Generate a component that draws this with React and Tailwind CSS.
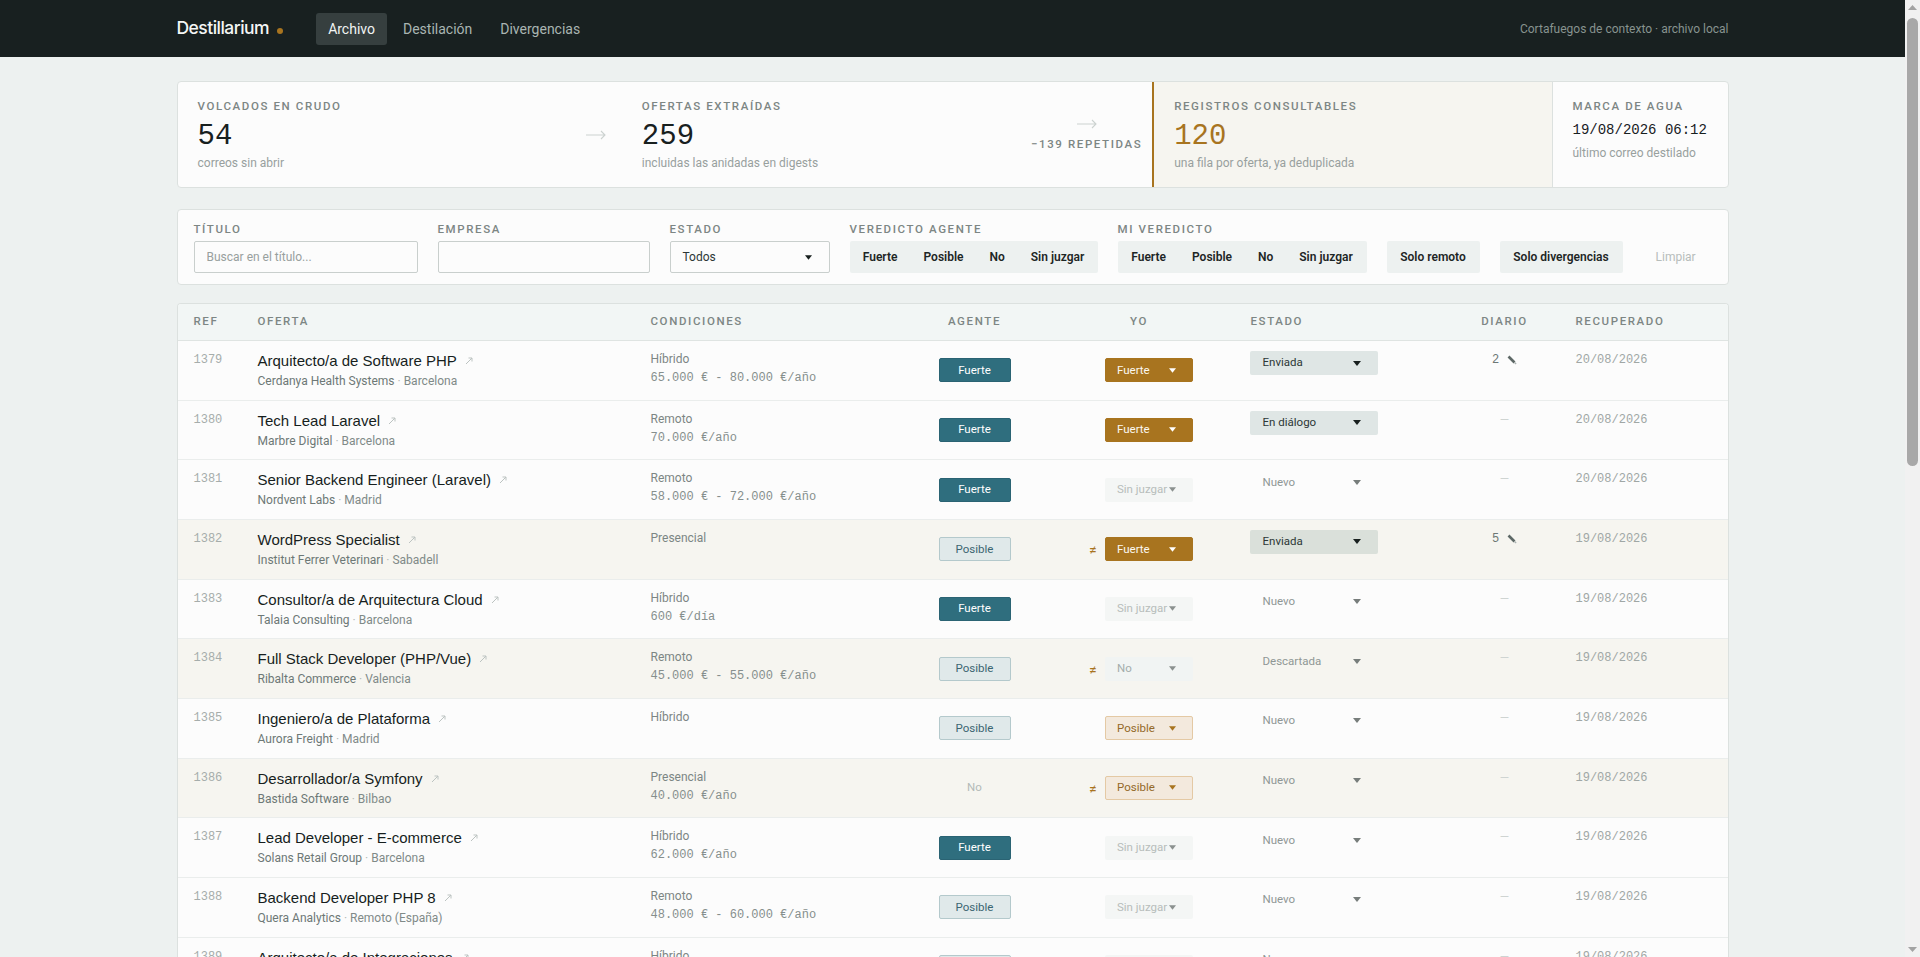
const sans = "font-['Roboto',sans-serif]";
const mono = "font-['Liberation_Mono',monospace]";
const display = "font-['Liberation_Sans',sans-serif]";

const rows = [
  { ref: 1379, title: "Arquitecto/a de Software PHP", company: "Cerdanya Health Systems", city: "Barcelona", mode: "Híbrido", pay: "65.000 € - 80.000 €/año", agent: "Fuerte", me: "Fuerte", state: "Enviada", diary: 2, date: "20/08/2026" },
  { ref: 1380, title: "Tech Lead Laravel", company: "Marbre Digital", city: "Barcelona", mode: "Remoto", pay: "70.000 €/año", agent: "Fuerte", me: "Fuerte", state: "En diálogo", date: "20/08/2026" },
  { ref: 1381, title: "Senior Backend Engineer (Laravel)", company: "Nordvent Labs", city: "Madrid", mode: "Remoto", pay: "58.000 € - 72.000 €/año", agent: "Fuerte", me: "Sin juzgar", state: "Nuevo", date: "20/08/2026" },
  { ref: 1382, title: "WordPress Specialist", company: "Institut Ferrer Veterinari", city: "Sabadell", mode: "Presencial", agent: "Posible", me: "Fuerte", state: "Enviada", diary: 5, date: "19/08/2026", diverge: true },
  { ref: 1383, title: "Consultor/a de Arquitectura Cloud", company: "Talaia Consulting", city: "Barcelona", mode: "Híbrido", pay: "600 €/día", agent: "Fuerte", me: "Sin juzgar", state: "Nuevo", date: "19/08/2026" },
  { ref: 1384, title: "Full Stack Developer (PHP/Vue)", company: "Ribalta Commerce", city: "Valencia", mode: "Remoto", pay: "45.000 € - 55.000 €/año", agent: "Posible", me: "No", state: "Descartada", date: "19/08/2026", diverge: true },
  { ref: 1385, title: "Ingeniero/a de Plataforma", company: "Aurora Freight", city: "Madrid", mode: "Híbrido", agent: "Posible", me: "Posible", state: "Nuevo", date: "19/08/2026" },
  { ref: 1386, title: "Desarrollador/a Symfony", company: "Bastida Software", city: "Bilbao", mode: "Presencial", pay: "40.000 €/año", agent: "No", me: "Posible", state: "Nuevo", date: "19/08/2026", diverge: true },
  { ref: 1387, title: "Lead Developer - E-commerce", company: "Solans Retail Group", city: "Barcelona", mode: "Híbrido", pay: "62.000 €/año", agent: "Fuerte", me: "Sin juzgar", state: "Nuevo", date: "19/08/2026" },
  { ref: 1388, title: "Backend Developer PHP 8", company: "Quera Analytics", city: "Remoto (España)", mode: "Remoto", pay: "48.000 € - 60.000 €/año", agent: "Posible", me: "Sin juzgar", state: "Nuevo", date: "19/08/2026" },
  { ref: 1389, title: "Arquitecto/a de Integraciones", company: "Solans Retail Group", city: "Barcelona", mode: "Híbrido", pay: "52.000 €/año", agent: "Posible", me: "Sin juzgar", state: "Nuevo", date: "19/08/2026" },
];

const columns = "grid grid-cols-[64px_393px_270px_140px_189px_217px_108px_1fr]";
const labelType = "text-[11.5px] font-medium tracking-[0.14em] uppercase text-[#7d8684]";

function Caret({ className = "" }) {
  return (
    <svg viewBox="0 0 8 5" className={"w-2 h-[5px] shrink-0 " + className} fill="currentColor">
      <path d="M0 0h8L4 5z" />
    </svg>
  );
}

function Arrow() {
  return (
    <svg viewBox="0 0 20 10" className="w-5 h-2.5" fill="none" stroke="#ccd2d0" strokeWidth="1.1">
      <path d="M0 5h19M15 1l4 4-4 4" />
    </svg>
  );
}

function Label({ children }) {
  return <div className={`${labelType} leading-[14px] whitespace-nowrap`}>{children}</div>;
}

function Stat({ label, value, note, gold }) {
  return (
    <div className={gold ? "px-5 pb-4 pt-[17px] border-l-2 border-[#a8741f] bg-[#f6f5f0]" : "px-5 pb-4 pt-[17px]"}>
      <Label>{label}</Label>
      <div className={`${mono} mt-[7px] text-[29px] leading-[34px] ${gold ? "text-[#a8741f]" : "text-[#18201f]"}`}>{value}</div>
      <div className="mt-px text-xs leading-4 text-[#98a09e]">{note}</div>
    </div>
  );
}

function Segments({ items, width }) {
  return (
    <div className={`flex h-8 items-center justify-center rounded-[2px] bg-[#edf1f0] ${width}`}>
      {items.map((item) => (
        <span key={item} className="px-[13px] text-xs font-semibold text-[#1d2625] whitespace-nowrap">{item}</span>
      ))}
    </div>
  );
}

function Field({ label, children }) {
  return (
    <div className="flex flex-col gap-[5px]">
      <Label>{label}</Label>
      {children}
    </div>
  );
}

function Scrollbar() {
  return (
    <div className="fixed right-0 top-0 flex h-screen w-[15px] flex-col items-center justify-between bg-[#f1f1f1]">
      <div className="flex flex-col items-center">
        <svg viewBox="0 0 9 5" className="mt-[5px] h-[5px] w-[9px]" fill="#a3a3a3"><path d="M4.5 0L9 5H0z" /></svg>
        <div className="mt-2 h-[448px] w-[11px] rounded-full bg-[#a8a8a8]" />
      </div>
      <svg viewBox="0 0 9 5" className="mb-[5px] h-[5px] w-[9px]" fill="#a3a3a3"><path d="M0 0h9L4.5 5z" /></svg>
    </div>
  );
}

const agentStyles = {
  Fuerte: "bg-[#2f6e7e] border-[#2a6373] text-white",
  Posible: "bg-[#e0e9ea] border-[#b4c9cc] text-[#3c6672]",
  No: "border-transparent text-[#b3bab8]",
};

const mineStyles = {
  Fuerte: "bg-[#a8741f] border-[#a8741f] text-[#fbf8f1]",
  Posible: "bg-[#f3e9dd] border-[#e4c9a4] text-[#94692a]",
  No: "bg-[#f1f4f3] border-transparent text-[#a4adab]",
  "Sin juzgar": "bg-[#f4f6f5] border-transparent text-[#b7bdbb]",
};

const caretStyles = {
  Fuerte: "text-white",
  Posible: "text-[#a8741f]",
  No: "text-[#8b918f]",
  "Sin juzgar": "text-[#8b918f]",
};

function Row({ row }) {
  const filled = row.state === "Enviada" || row.state === "En diálogo";
  return (
    <div className={`${columns} h-[59.67px] border-b border-[#eaedec] ${row.diverge ? "bg-[#f6f5f0]" : ""}`}>
      <div className={`${mono} pl-4 pt-[10px] text-xs leading-[18px] text-[#a6adab]`}>{row.ref}</div>
      <div className="pl-4 pt-[10px]">
        <div className="flex items-center gap-2">
          <span className={`${display} text-[15px] leading-5 text-[#161e1d]`}>{row.title}</span>
          <svg viewBox="0 0 8 8" className="w-2 h-2" fill="none" stroke="#bcc3c1" strokeWidth="1">
            <path d="M1 7l6-6M3.5 1H7v3.5" />
          </svg>
        </div>
        <div className="mt-0.5 text-xs leading-4 text-[#6d7876]">
          {row.company} <span className="text-[#b4bab8]">·</span> <span className="text-[#808a88]">{row.city}</span>
        </div>
      </div>
      <div className="pl-4 pt-[10px]">
        <div className="text-xs leading-4 text-[#7c8684]">{row.mode}</div>
        {row.pay && <div className={`${mono} mt-[3px] text-xs leading-4 text-[#868f8d]`}>{row.pay}</div>}
      </div>
      <div className="flex items-center justify-center">
        <span className={`flex h-6 w-[72px] items-center justify-center rounded-[2px] border text-[11.5px] ${agentStyles[row.agent]}`}>{row.agent}</span>
      </div>
      <div className="flex items-center justify-center">
        <span className="w-5 pl-1 pt-0.5 text-sm text-[#a8741f]">{row.diverge ? "≠" : ""}</span>
        <div className={`flex h-6 w-[88px] items-center justify-between rounded-[2px] border pl-[11px] pr-4 text-[11.5px] ${mineStyles[row.me]}`}>
          <span className="whitespace-nowrap">{row.me}</span>
          <Caret className={"w-[7px] " + caretStyles[row.me]} />
        </div>
      </div>
      <div className="pl-4 pt-[10px]">
        <div className={`flex h-6 w-32 items-center justify-between rounded-[2px] pl-[13px] pr-[17px] text-[11.5px] ${filled ? "bg-[#0f4a44]/12 text-[#2c3736]" : "text-[#8f9795]"}`}>
          <span>{row.state}</span>
          <Caret className={filled ? "text-[#18201f]" : "text-[#777d7b]"} />
        </div>
      </div>
      <div className="flex justify-center pt-[10px]">
        {row.diary ? (
          <div className="flex h-[18px] items-center gap-2">
            <span className={`${mono} text-xs text-[#6d7876]`}>{row.diary}</span>
            <svg viewBox="0 0 10 10" className="w-2.5 h-2.5" fill="none">
              <path d="M1.5 1.5l6 6" stroke="#5d6866" strokeWidth="2.6" />
              <path d="M7.5 7.5l1.6 1.6" stroke="#aab2b0" strokeWidth="1.4" />
            </svg>
          </div>
        ) : (
          <span className="h-[18px] leading-[18px] text-xs text-[#cfd4d2]">—</span>
        )}
      </div>
      <div className={`${mono} pl-[17px] pt-[11px] text-xs leading-4 text-[#a0a7a5]`}>{row.date}</div>
    </div>
  );
}

export default function App() {
  return (
    <div className={`${sans} min-h-[1975px] bg-[#edf1f0] pr-[15px]`}>
      <header className="h-[57px] bg-[#182020]">
        <div className="mx-auto flex h-full max-w-[1600px] items-center px-6">
          <span className="font-['Inter',sans-serif] text-[17.5px] font-medium tracking-[-0.03em] text-[#f4f6f5]">Destillarium</span>
          <span className="ml-2 mt-[5px] h-1.5 w-1.5 rounded-full bg-[#a8741f]" />
          <nav className="ml-[33px] flex gap-1 text-sm">
            <a className="flex h-8 items-center rounded-[3px] bg-[#363f3f] px-3 text-[#f1f4f3]">Archivo</a>
            <a className="flex h-8 items-center px-3 text-[#a9b5b2]">Destilación</a>
            <a className="flex h-8 items-center px-3 text-[#a9b5b2]">Divergencias</a>
          </nav>
          <span className="ml-auto text-xs text-[#87938f]">Cortafuegos de contexto · archivo local</span>
        </div>
      </header>

      <main className="mx-auto max-w-[1600px] px-6 pt-6">
        <section className="grid grid-cols-[1fr_45px_1fr_131px_1fr_176px] overflow-hidden rounded border border-[#dce1df] bg-[#fcfcfc]">
          <Stat label="Volcados en crudo" value="54" note="correos sin abrir" />
          <div className="flex items-center justify-center pr-[6px]"><Arrow /></div>
          <Stat label="Ofertas extraídas" value="259" note="incluidas las anidadas en digests" />
          <div className="flex flex-col items-center justify-center gap-2">
            <Arrow />
            <span className={`${labelType} leading-[14px] whitespace-nowrap`}>−139 repetidas</span>
          </div>
          <Stat label="Registros consultables" value="120" note="una fila por oferta, ya deduplicada" gold />
          <div className="border-l border-[#dce1df] px-5 pb-4 pt-[17px]">
            <Label>Marca de agua</Label>
            <div className={`${mono} mt-[7px] text-sm leading-5 text-[#18201f] whitespace-nowrap`}>19/08/2026 06:12</div>
            <div className="mt-[5px] text-xs leading-4 text-[#98a09e]">último correo destilado</div>
          </div>
        </section>

        <section className="mt-[21px] flex items-end gap-5 rounded border border-[#dce1df] bg-[#fcfcfc] px-4 pb-[11px] pt-3">
          <Field label="Título">
            <input placeholder="Buscar en el título..." className="h-8 w-56 rounded-[2px] border border-[#c9cfcd] bg-[#fcfcfc] px-3 text-xs placeholder:text-[#98a09e]" />
          </Field>
          <Field label="Empresa">
            <input className="h-8 w-[212px] rounded-[2px] border border-[#c9cfcd] bg-[#fcfcfc] px-3 text-xs" />
          </Field>
          <Field label="Estado">
            <div className="flex h-8 w-40 items-center justify-between rounded-[2px] border border-[#c9cfcd] pl-3 pr-[17px] text-xs text-[#2c3736]">
              <span>Todos</span>
              <Caret className="w-[7px] text-[#18201f]" />
            </div>
          </Field>
          <Field label="Veredicto agente">
            <Segments items={["Fuerte", "Posible", "No", "Sin juzgar"]} width="w-[248px]" />
          </Field>
          <Field label="Mi veredicto">
            <Segments items={["Fuerte", "Posible", "No", "Sin juzgar"]} width="w-[249px]" />
          </Field>
          <Segments items={["Solo remoto"]} width="w-[93px]" />
          <Segments items={["Solo divergencias"]} width="w-[123px]" />
          <button className="flex h-8 items-center px-[13px] text-xs text-[#b7bdbb]">Limpiar</button>
        </section>

        <section className="mt-[18px] overflow-hidden rounded-t border border-b-0 border-[#dce1df] bg-[#fcfcfc]">
          <div className={`${columns} ${labelType} h-[37px] items-center border-b border-[#dfe4e2] bg-[#f2f6f5]`}>
            <div className="pl-4">Ref</div>
            <div className="pl-4">Oferta</div>
            <div className="pl-4">Condiciones</div>
            <div className="text-center">Agente</div>
            <div className="text-center">Yo</div>
            <div className="pl-[17px]">Estado</div>
            <div className="text-center">Diario</div>
            <div className="pl-[17px]">Recuperado</div>
          </div>
          {rows.map((row) => <Row key={row.ref} row={row} />)}
        </section>
      </main>
      <Scrollbar />
    </div>
  );
}
